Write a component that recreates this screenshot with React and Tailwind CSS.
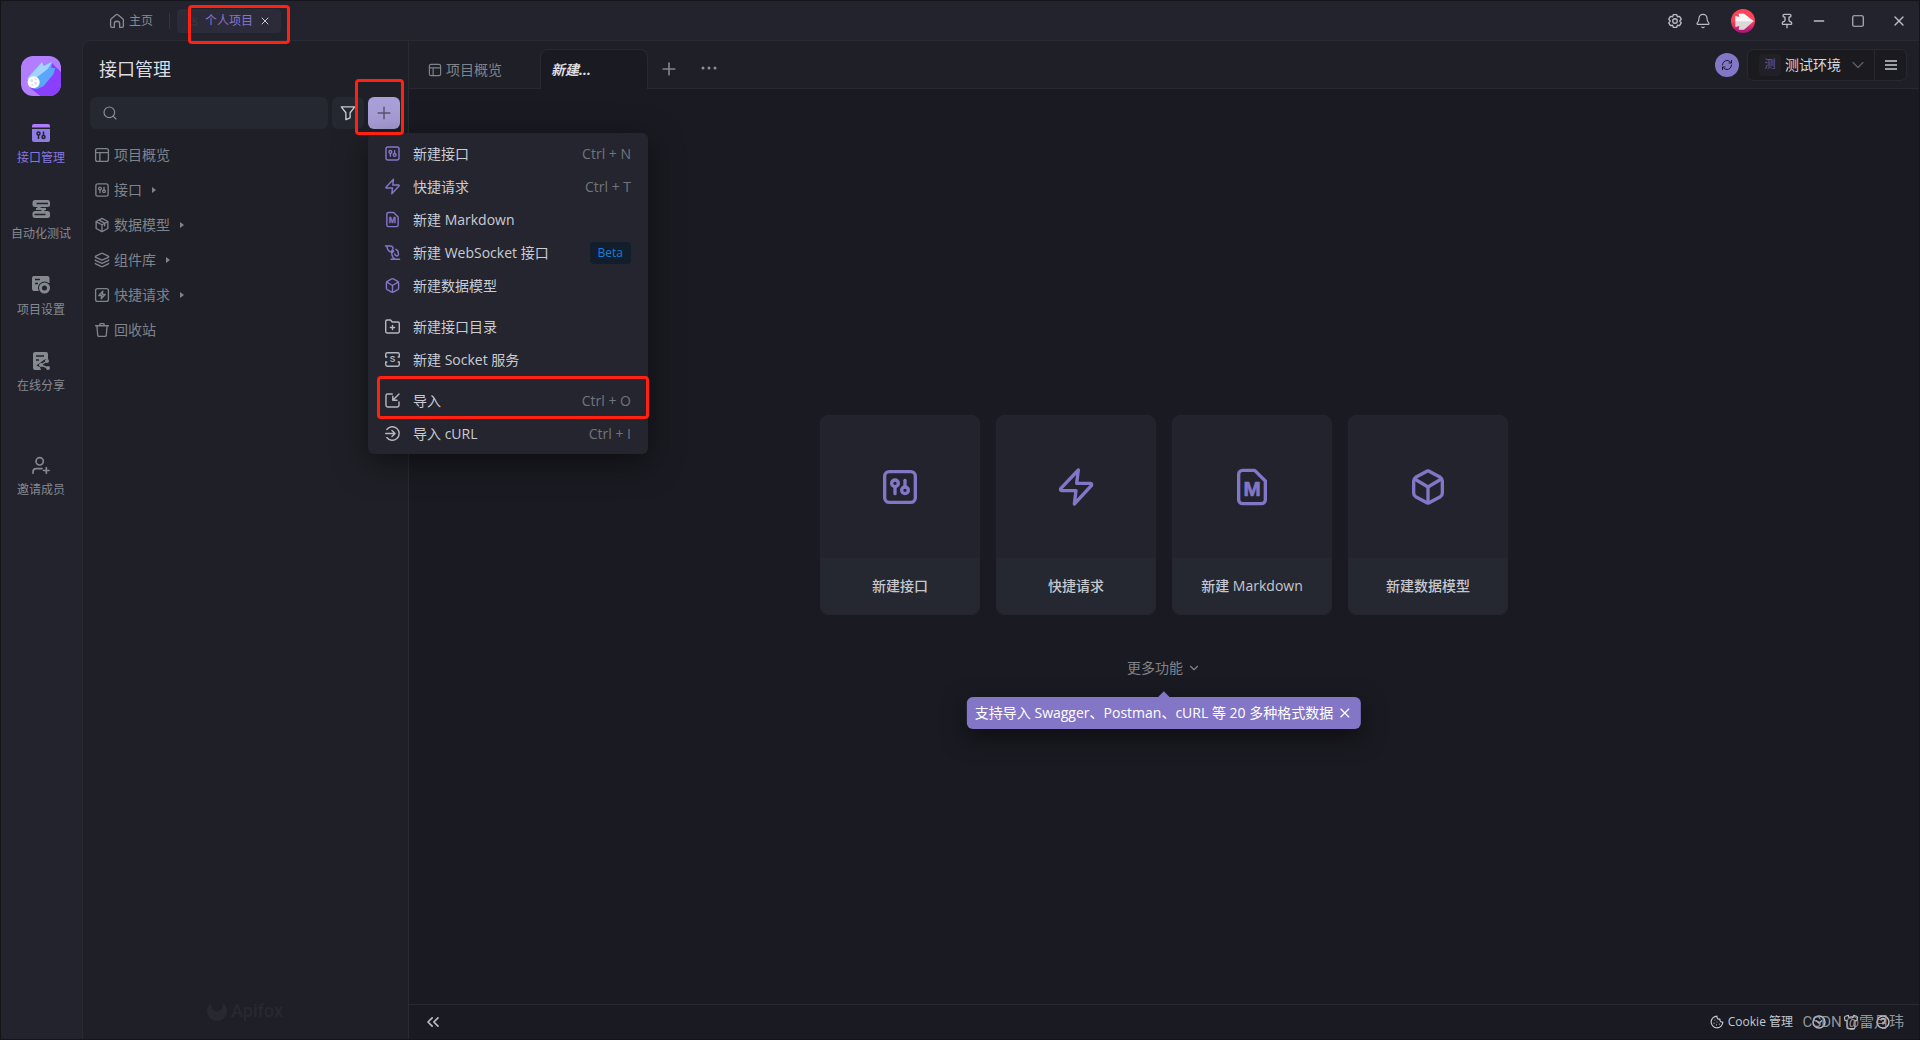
/**
 * API management workspace
 * Title bar, navigation rail, resource tree with the "new" menu, and the start page
 */
import { useState } from 'react';
import {
  Bell,
  ChevronDown,
  ChevronsLeft,
  Cookie,
  Layers,
  Minus,
  Pin,
  Plus,
  RefreshCw,
  Search,
  Shirt,
  Square,
  X,
} from 'lucide-react';

// Stroke icons share a 120 unit box
const Glyph = ({ className, weight = 10, children }) => (
  <svg
    viewBox="0 0 120 120"
    className={className}
    fill="none"
    stroke="currentColor"
    strokeWidth={weight}
    strokeLinecap="round"
    strokeLinejoin="round"
    aria-hidden="true"
  >
    {children}
  </svg>
);

const ApiIcon = ({ className }) => (
  <Glyph className={className}>
    <rect x="14" y="14" width="92" height="92" rx="14" />
    <circle cx="45" cy="49" r="10" />
    <path d="M45 59v21" />
    <circle cx="75" cy="70" r="10" />
    <path d="M75 60V40" />
  </Glyph>
);

const BoltIcon = ({ className }) => (
  <Glyph className={className}>
    <path d="M67 9L14 65Q12 71 18 71L60 71L55 111L106 56Q109 50 103 49L62 49Z" />
  </Glyph>
);

const MarkdownIcon = ({ className }) => (
  <Glyph className={className}>
    <path d="M32 10h36l32 32v56a12 12 0 0 1-12 12H32a12 12 0 0 1-12-12V22a12 12 0 0 1 12-12z" />
    <text
      x="60"
      y="88"
      textAnchor="middle"
      fontSize="62"
      fontWeight="700"
      fill="currentColor"
      strokeWidth="2"
      fontFamily="Liberation Sans, sans-serif"
    >
      M
    </text>
  </Glyph>
);

const CubeIcon = ({ className }) => (
  <Glyph className={className}>
    <path d="M54 14Q60 10 66 14L97 31Q103 35 103 42V79Q103 85 97 89L66 106Q60 110 54 106L23 89Q17 85 17 79V42Q17 35 23 31Z" />
    <path d="M20 36l40 24 40-24M60 60v46" />
  </Glyph>
);

const SocketIcon = ({ className }) => (
  <Glyph className={className}>
    <path d="M10 14h32c18 0 26 12 20 24L50 52M20 16q4 30 20 38 14 6 26-6M54 66l14-14M84 38q20 10 18 36-2 12-14 10-8-2-12-14M56 72q0 20 22 36M50 108h60" />
  </Glyph>
);

const ModelIcon = ({ className }) => (
  <Glyph className={className}>
    <path d="M60 10l44 24v52l-44 24-44-24V34z" />
    <path d="M18 36l42 22 42-22M60 58v50M38 24l42 22v20" />
  </Glyph>
);

const LayoutIcon = ({ className }) => (
  <Glyph className={className}>
    <rect x="12" y="12" width="96" height="96" rx="14" />
    <path d="M12 42h96M44 42v66" />
  </Glyph>
);

const QuickIcon = ({ className }) => (
  <Glyph className={className}>
    <rect x="12" y="12" width="96" height="96" rx="14" />
    <path d="M66 32L36 64h22l-4 24 30-32H62z" />
  </Glyph>
);

const TrashIcon = ({ className }) => (
  <Glyph className={className}>
    <path d="M12 28h96M42 26l4-14h28l4 14M22 30l6 70q1 8 9 8h46q8 0 9-8l6-70" />
  </Glyph>
);

const FolderPlusIcon = ({ className }) => (
  <Glyph className={className}>
    <path d="M12 24q0-10 10-10h24l12 14h40q10 0 10 10v58q0 10-10 10H22q-10 0-10-10z" />
    <path d="M60 52v30M45 67h30" />
  </Glyph>
);

const ServiceIcon = ({ className }) => (
  <Glyph className={className}>
    <path d="M12 42V24q0-12 12-12h72q12 0 12 12v18M12 42h8M108 42h-8M12 78v18q0 12 12 12h72q12 0 12-12V78M12 78h8M108 78h-8" />
    <text
      x="60"
      y="80"
      textAnchor="middle"
      fontSize="58"
      fontWeight="700"
      fill="currentColor"
      stroke="none"
      fontFamily="Liberation Sans, sans-serif"
    >
      S
    </text>
  </Glyph>
);

const ImportIcon = ({ className }) => (
  <Glyph className={className}>
    <path d="M58 14H26q-12 0-12 12v68q0 12 12 12h68q12 0 12-12V70M106 14L62 58M62 30v28h30" />
  </Glyph>
);

const CurlIcon = ({ className }) => (
  <Glyph className={className}>
    <path d="M20 32a48 48 0 1 1 0 56M12 60h64M56 38l22 22-22 22" />
  </Glyph>
);

const HomeIcon = ({ className }) => (
  <Glyph className={className}>
    <path d="M12 54q0-6 5-10l36-31q7-5 14 0l36 31q5 4 5 10v44q0 10-10 10H80V80q0-18-20-18T40 80v28H22q-10 0-10-10z" />
  </Glyph>
);

const GearIcon = ({ className }) => (
  <Glyph className={className}>
    <path d="M48 12h24l6 16 16-3 13 21-11 14 11 14-13 21-16-3-6 16H48l-6-16-16 3-13-21 11-14-11-14 13-21 16 3z" />
    <circle cx="60" cy="60" r="17" />
  </Glyph>
);

const FunnelIcon = ({ className }) => (
  <Glyph className={className}>
    <path d="M10 14h100L76 58v38l-32 14V58z" />
  </Glyph>
);

const InviteIcon = ({ className }) => (
  <Glyph className={className}>
    <circle cx="52" cy="32" r="22" />
    <path d="M12 104V96q0-20 20-20h34M92 70v34M75 87h34" />
  </Glyph>
);

const ApiSolidIcon = ({ className }) => (
  <svg viewBox="0 0 36 36" className={className} aria-hidden="true">
    <path d="M4 0h28a4 4 0 0 1 4 4v3H0V4a4 4 0 0 1 4-4z" fill="#b07aff" />
    <path d="M0 10h36v22a4 4 0 0 1-4 4H4a4 4 0 0 1-4-4z" fill="#8f7be6" />
    <g fill="none" stroke="#23232d" strokeWidth="3">
      <circle cx="13" cy="19" r="3" />
      <path d="M13 22v8" />
      <circle cx="23" cy="26" r="3" />
      <path d="M23 23v-8" />
    </g>
  </svg>
);

const TestIcon = ({ className }) => (
  <svg viewBox="0 0 36 36" className={className} fill="currentColor" aria-hidden="true">
    <rect x="1" y="0" width="35" height="14" rx="5" />
    <rect x="1" y="22" width="35" height="14" rx="5" />
    <path d="M10 12l16 12M8 18h20" stroke="currentColor" strokeWidth="4" />
    <path d="M9 7h23M5 29h22" stroke="#23232d" strokeWidth="3" />
  </svg>
);

const SettingsIcon = ({ className }) => (
  <svg viewBox="0 0 36 36" className={className} fill="currentColor" aria-hidden="true">
    <path d="M4 0h27a4 4 0 0 1 4 4v10H18l-4 4v12H4a4 4 0 0 1-4-4V4a4 4 0 0 1 4-4z" />
    <path d="M6 7h10M6 15h6" stroke="#23232d" strokeWidth="3" />
    <circle cx="25" cy="24" r="13" fill="#23232d" />
    <circle cx="25" cy="24" r="8" fill="none" stroke="currentColor" strokeWidth="6" />
  </svg>
);

const ShareIcon = ({ className }) => (
  <svg viewBox="0 0 36 36" className={className} fill="currentColor" aria-hidden="true">
    <path d="M6 0h22a4 4 0 0 1 4 4v10l-8 2-10 8 4 12H6a4 4 0 0 1-4-4V4a4 4 0 0 1 4-4z" />
    <path d="M8 8h16M8 16h6" stroke="#23232d" strokeWidth="3" />
    <path d="M30 18l-12 8 14 6" fill="none" stroke="#23232d" strokeWidth="9" />
    <path d="M30 18l-12 8 14 6" fill="none" stroke="currentColor" strokeWidth="3" />
    <circle cx="30" cy="18" r="4" />
    <circle cx="18" cy="26" r="4" />
    <circle cx="32" cy="32" r="4" />
  </svg>
);

const AppLogo = () => (
  <svg viewBox="0 0 120 120" className="size-10 rounded-xl" role="img" aria-label="Logo">
    <rect width="120" height="120" fill="#b27dff" />
    <path d="M92 20l28 28v72H58L28 96z" fill="#8a3fff" />
    <path d="M20 66l43-48 5 12 26-13-3 18 12 2-6 18-29 35-19 9q-20 0-26-18z" fill="#59a6fa" />
    <path d="M20 66l43-48 5 12 26-13-14 22-34 26q-16 10-21 24-6-8-5-23z" fill="#a3d3ff" />
    <circle cx="38" cy="79" r="18" fill="#fff" />
    <g fill="#d8dcec">
      <circle cx="32" cy="74" r="4" />
      <circle cx="44" cy="82" r="4" />
      <circle cx="34" cy="87" r="3" />
      <circle cx="43" cy="70" r="3" />
    </g>
  </svg>
);

const Avatar = () => (
  <svg viewBox="0 0 72 72" className="size-6 rounded-full" role="img" aria-label="Avatar">
    <defs>
      <linearGradient id="avatar" x1="0" y1="0" x2="0" y2="1">
        <stop offset="0.5" stopColor="#ff4459" />
        <stop offset="1" stopColor="#a3107c" />
      </linearGradient>
    </defs>
    <rect width="72" height="72" fill="url(#avatar)" />
    <path d="M13 22l12 2-2-10h16l29 23-29 25H23l2-11-12 3z" fill="#dcd8da" />
    <path d="M13 37V22l12 2-2-10h16l29 23z" fill="#f8f6f6" />
  </svg>
);

const BrandMark = ({ className }) => (
  <svg viewBox="0 0 20 20" className={className} fill="currentColor" aria-hidden="true">
    <path d="M4 2a10 10 0 1 0 12 0l-1 6-5 3-5-3z" />
  </svg>
);

const Caret = () => (
  <svg viewBox="0 0 4 6" className="ml-1.5 h-1.5 w-1" fill="currentColor" aria-hidden="true">
    <path d="M0 0l4 3-4 3z" />
  </svg>
);

// Annotation frame, sized by the caller
const Marker = ({ className }) => (
  <span className={`pointer-events-none absolute rounded-sm border-3 border-[#ff2212] ${className}`} />
);

const railItems = [
  { label: '接口管理', icon: ApiSolidIcon, active: true },
  { label: '自动化测试', icon: TestIcon },
  { label: '项目设置', icon: SettingsIcon },
  { label: '在线分享', icon: ShareIcon },
];

const treeItems = [
  { label: '项目概览', icon: LayoutIcon },
  { label: '接口', icon: ApiIcon, nested: true },
  { label: '数据模型', icon: ModelIcon, nested: true },
  { label: '组件库', icon: Layers, nested: true },
  { label: '快捷请求', icon: QuickIcon, nested: true },
  { label: '回收站', icon: TrashIcon },
];

const menuGroups = [
  [
    { label: '新建接口', icon: ApiIcon, accent: true, shortcut: 'Ctrl + N' },
    { label: '快捷请求', icon: BoltIcon, accent: true, shortcut: 'Ctrl + T' },
    { label: '新建 Markdown', icon: MarkdownIcon, accent: true },
    { label: '新建 WebSocket 接口', icon: SocketIcon, accent: true, badge: 'Beta' },
    { label: '新建数据模型', icon: CubeIcon, accent: true },
  ],
  [
    { label: '新建接口目录', icon: FolderPlusIcon },
    { label: '新建 Socket 服务', icon: ServiceIcon },
  ],
  [
    { label: '导入', icon: ImportIcon, shortcut: 'Ctrl + O', marked: true },
    { label: '导入 cURL', icon: CurlIcon, shortcut: 'Ctrl + I' },
  ],
];

const cards = [
  { label: '新建接口', icon: ApiIcon },
  { label: '快捷请求', icon: BoltIcon },
  { label: '新建 Markdown', icon: MarkdownIcon },
  { label: '新建数据模型', icon: CubeIcon },
];

const TitleBar = () => (
  <header className="flex h-[39px] shrink-0 items-center justify-between pt-px">
    <nav className="flex items-center pl-27 text-xs">
      <a href="#home" className="flex items-center gap-1 text-[#878b92]">
        <HomeIcon className="size-4" />
        主页
      </a>
      <span className="ml-4 h-4 w-px bg-[#343541]" />
      <div className="relative ml-[7px] flex h-6 w-[104px] items-center rounded bg-[#2c2b3a]">
        <a href="#project" className="flex items-center gap-[7px] pl-3 text-[#8576c9]">
          <ImportIcon className="size-[9px] text-[#42424e]" />
          个人项目
        </a>
        <button aria-label="关闭项目" className="ml-1.5 text-[#c8cad0]">
          <X className="size-3" />
        </button>
        <Marker className="-top-1 left-[11px] h-[39px] w-[102px]" />
      </div>
    </nav>
    <div className="flex items-center pr-3 text-[#b9bdc6]">
      <button aria-label="设置">
        <GearIcon className="size-4" />
      </button>
      <button aria-label="通知" className="ml-3">
        <Bell className="size-4" strokeWidth={1.75} />
      </button>
      <button aria-label="账户" className="ml-5">
        <Avatar />
      </button>
      <button aria-label="置顶" className="ml-6">
        <Pin className="size-4" />
      </button>
      <button aria-label="最小化" className="ml-4">
        <Minus className="size-4" />
      </button>
      <button aria-label="最大化" className="ml-6">
        <Square className="size-3.5" />
      </button>
      <button aria-label="关闭" className="ml-[26px]">
        <X className="size-4" />
      </button>
    </div>
  </header>
);

const Rail = () => (
  <aside className="flex w-[81px] shrink-0 flex-col items-center pt-4 pr-px">
    <AppLogo />
    <nav className="mt-7 flex flex-col items-center gap-8 text-xs leading-5 text-[#858990]">
      {railItems.map(({ label, icon: Icon, active }) => (
        <a
          key={label}
          href={`#${label}`}
          className={`flex flex-col items-center gap-1.5 ${active ? 'text-[#8576e0]' : ''}`}
        >
          <Icon className="size-[18px]" />
          {label}
        </a>
      ))}
      <a href="#invite" className="mt-7 flex flex-col items-center gap-1">
        <InviteIcon className="size-5" />
        邀请成员
      </a>
    </nav>
  </aside>
);

const NewMenu = () => (
  <div
    role="menu"
    className="absolute top-9 left-0 w-[280px] rounded-md bg-[#25252f] py-1 text-sm shadow-[0_8px_32px_rgba(0,0,0,0.5)]"
  >
    {menuGroups.map((group, index) => (
      <div key={index} className={index > 0 ? 'mt-2' : ''}>
        {group.map(({ label, icon: Icon, accent, shortcut, badge, marked }) => (
          <button
            key={label}
            role="menuitem"
            className="relative flex h-[33px] w-full items-center pr-[17px] pl-4 text-[#c9ccd3]"
          >
            <Icon className={`size-[17px] ${accent ? 'text-[#8576c7]' : 'text-[#b4b7bf]'}`} />
            <span className="ml-3 whitespace-nowrap">{label}</span>
            {shortcut && <span className="ml-auto text-[#70757d]">{shortcut}</span>}
            {badge && (
              <span className="ml-auto rounded bg-[#121e2c] px-2 text-xs leading-[22px] text-[#177ddc]">{badge}</span>
            )}
            {marked && <Marker className="-top-2 left-[9px] h-[43px] w-[272px]" />}
          </button>
        ))}
      </div>
    ))}
  </div>
);

const ResourcePanel = () => {
  const [query, setQuery] = useState('');
  const [menuOpen, setMenuOpen] = useState(true);

  return (
    <section className="relative z-10 flex w-[326px] shrink-0 flex-col border-r border-[#2a2a34] pt-3.5 pr-2 pl-[7px]">
      <h1 className="pl-[9px] text-lg leading-7 text-[#dcdee2]">接口管理</h1>

      {/* Search, filter and create */}
      <div className="mt-3.5 flex gap-1">
        <label className="flex h-8 min-w-0 flex-1 items-center rounded-md bg-[#252731] px-3">
          <Search className="size-4 shrink-0 text-[#8b8f97]" strokeWidth={1.75} />
          <input
            type="text"
            aria-label="搜索"
            value={query}
            onChange={(e) => setQuery(e.target.value)}
            className="ml-2 w-full min-w-0 bg-transparent text-sm text-[#dcdee2] outline-none"
          />
        </label>
        <button aria-label="筛选" className="flex size-8 items-center justify-center rounded-md bg-[#252731] text-[#c9ccd3]">
          <FunnelIcon className="size-4" />
        </button>
        <div className="relative">
          <button
            aria-label="新建"
            aria-expanded={menuOpen}
            onClick={() => setMenuOpen(!menuOpen)}
            className="flex size-8 items-center justify-center rounded-md bg-[#a99fd8] text-[#5a5570]"
          >
            <Plus className="size-5" strokeWidth={1.75} />
          </button>
          {menuOpen && <NewMenu />}
          <Marker className="top-[-18px] left-[-13px] h-14 w-[49px]" />
        </div>
      </div>

      {/* Resource tree */}
      <nav className="mt-2 flex flex-col text-sm text-[#7f848b]">
        {treeItems.map(({ label, icon: Icon, nested }) => (
          <a key={label} href={`#${label}`} className="flex h-[35px] items-center gap-1 pl-1">
            <Icon className="size-4" />
            {label}
            {nested && <Caret />}
          </a>
        ))}
      </nav>

      <div className="mt-auto flex items-center justify-center gap-1 pb-3.5 font-[Roboto,sans-serif] text-lg leading-7 font-medium text-[#282831]">
        <BrandMark className="size-5" />
        Apifox
      </div>
    </section>
  );
};

const TabBar = () => (
  <div className="flex h-12 shrink-0 items-center border-b border-[#292933]">
    <a href="#overview" className="flex w-[131px] items-center gap-1 pt-2.5 pl-[19px] text-sm text-[#7f848b]">
      <LayoutIcon className="size-3.5" />
      项目概览
    </a>
    <a
      href="#new"
      className="-mb-px flex h-10 w-[108px] items-center self-end rounded-t-lg border border-b-0 border-[#292933] bg-[#1a1a22] pl-2.5 text-sm font-bold text-[#dcdee2] italic"
    >
      新建...
    </a>
    <button aria-label="新标签页" className="ml-[11px] pt-2 text-[#7f848b]">
      <Plus className="size-5" />
    </button>
    <button aria-label="更多标签页" className="ml-5 pt-1.5 text-[#8b8f97]">
      <svg viewBox="0 0 40 8" className="h-1 w-5" fill="currentColor">
        <circle cx="8" cy="4" r="3" />
        <circle cx="20" cy="4" r="3" />
        <circle cx="32" cy="4" r="3" />
      </svg>
    </button>

    <div className="ml-auto flex items-center gap-2 pr-3">
      <button aria-label="同步" className="flex size-6 items-center justify-center rounded-full bg-[#8476c6] text-[#1d1d26]">
        <RefreshCw className="size-3" />
      </button>
      <div className="flex h-8 items-center rounded-md border border-[#292933] bg-[#1a1a1f]">
        <div className="relative flex h-full w-[126px] items-center gap-1 pl-[11px]">
          <span className="flex size-[22px] items-center justify-center rounded bg-[#202026] text-[11px] text-[#6b59b0]">测</span>
          <select
            aria-label="环境"
            className="w-20 appearance-none bg-transparent text-sm text-[#d5d8dd] outline-none"
            defaultValue="test"
          >
            <option value="test">测试环境</option>
          </select>
          <ChevronDown className="pointer-events-none absolute right-1.5 size-5 text-[#5d6068]" strokeWidth={1.5} />
        </div>
        <button aria-label="环境管理" className="flex h-full w-8 items-center justify-center border-l border-[#292933] text-[#c9ccd3]">
          <svg viewBox="0 0 24 20" className="h-2.5 w-3" fill="none" stroke="currentColor" strokeWidth="3">
            <path d="M0 2h24M0 10h24M0 18h24" />
          </svg>
        </button>
      </div>
    </div>
  </div>
);

const StartPage = () => {
  const [tipOpen, setTipOpen] = useState(true);

  return (
    <div className="flex flex-1 flex-col items-center justify-center">
      <div className="flex gap-4">
        {cards.map(({ label, icon: Icon }) => (
          <button
            key={label}
            className="flex h-[200px] w-40 flex-col overflow-hidden rounded-lg border border-[#25252f] bg-[#23232d] text-sm font-medium text-[#c5c9cf]"
          >
            <span className="flex w-full flex-1 items-center justify-center text-[#8476c6]">
              <Icon className="size-10" />
            </span>
            <span className="flex h-14 w-full items-center justify-center bg-[#252731]">{label}</span>
          </button>
        ))}
      </div>

      <div className="relative mt-[42px]">
        <button className="flex items-center gap-1 text-sm leading-[22px] text-[#7f848b]">
          更多功能
          <ChevronDown className="size-3.5" />
        </button>
        {tipOpen && (
          <div
            role="tooltip"
            className="absolute top-10 left-1/2 flex h-8 -translate-x-1/2 items-center gap-1 rounded-md bg-[#8476c6] px-2 text-sm whitespace-nowrap text-white shadow-[0_8px_24px_rgba(0,0,0,0.5)]"
          >
            <span className="absolute -top-1 left-1/2 size-2 -translate-x-1/2 rotate-45 bg-[#8476c6]" />
            支持导入 Swagger、Postman、cURL 等 20 多种格式数据
            <button aria-label="关闭提示" onClick={() => setTipOpen(false)}>
              <X className="size-4" strokeWidth={1.75} />
            </button>
          </div>
        )}
      </div>
    </div>
  );
};

const StatusBar = () => (
  <footer className="relative flex h-[35px] shrink-0 items-center justify-between border-t border-[#2a2a34] pr-7 pl-3.5 text-[#b9bdc6]">
    <button aria-label="收起侧栏">
      <ChevronsLeft className="size-5" />
    </button>
    <div className="flex items-center gap-4 text-xs">
      <button className="flex items-center gap-1 pr-0.5 text-[#c5c9cf]">
        <Cookie className="size-3.5" />
        Cookie 管理
      </button>
      <button aria-label="历史">
        <svg viewBox="0 0 32 32" className="size-4" fill="none" stroke="currentColor" strokeWidth="3">
          <circle cx="16" cy="16" r="12" />
          <path d="M10 13l6 5 6-5" />
        </svg>
      </button>
      <button aria-label="主题">
        <Shirt className="size-4" strokeWidth={1.75} />
      </button>
      <button aria-label="帮助">
        <svg viewBox="0 0 32 32" className="size-4" fill="none" stroke="currentColor" strokeWidth="3">
          <circle cx="16" cy="16" r="12" />
          <path d="M12 13a4 4 0 1 1 4 4v4" />
        </svg>
      </button>
    </div>
    <span className="pointer-events-none absolute right-[15px] font-[Roboto,'Noto_Sans_CJK_SC',sans-serif] text-[15px] leading-6 text-[#a3a4a8]/90">
      CSDN @雷月玮
    </span>
  </footer>
);

const App = () => (
  <div className="flex h-screen flex-col border border-[#141419] bg-[#23232d] font-['Open_Sans','Noto_Sans_CJK_SC',sans-serif]">
    <TitleBar />
    <div className="flex min-h-0 flex-1">
      <Rail />
      <div className="flex min-w-0 flex-1 rounded-tl-lg border-t border-l border-[#2a2a34] bg-[#1f1f27]">
        <ResourcePanel />
        <main className="flex min-w-0 flex-1 flex-col">
          <TabBar />
          <div className="flex min-h-0 flex-1 flex-col bg-[#1a1a22]">
            <StartPage />
            <StatusBar />
          </div>
        </main>
      </div>
    </div>
  </div>
);

export default App;
